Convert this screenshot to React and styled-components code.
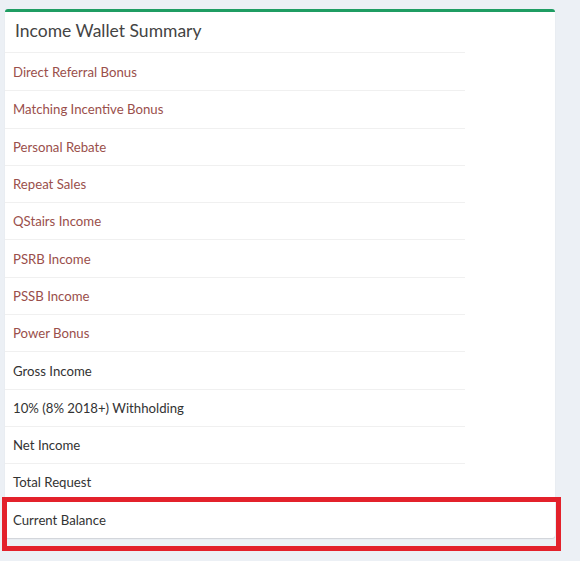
import styled, { createGlobalStyle } from "styled-components"

const GlobalStyle = createGlobalStyle`
  body {
    margin: 0;
    background: #ecf0f5;
    font-family: Lato, "Open Sans", sans-serif;
  }
`

const Page = styled.div`
  position: relative;
  width: 580px;
  height: 561px;
  padding: 9px 25px 0 5px;
  box-sizing: border-box;
`

const Box = styled.div`
  background: #fff;
  border-top: 3px solid #1f9d63;
  border-radius: 3px;
  box-shadow: 0 1px 1px rgba(0, 0, 0, 0.12);
`

const BoxHeader = styled.div`
  padding: 8px 10px 0 10px;
  height: 41px;
  box-sizing: border-box;
  width: 460px;
  border-bottom: 1px solid #f0f0f0;
`

const Title = styled.h3`
  margin: 0;
  font-size: 17.5px;
  font-weight: 400;
  color: #444;
`

const Table = styled.div`
  display: flex;
  flex-direction: column;
`

const Row = styled.div`
  width: 460px;
  height: 37.3px;
  box-sizing: border-box;
  padding: 0 8px;
  display: flex;
  align-items: center;
  font-size: 13.2px;
  color: ${p => (p.$link ? "#9a4f4b" : "#333")};
  border-top: ${p => (p.$first ? "none" : "1px solid #f0f0f0")};
`

const Highlight = styled.div`
  position: absolute;
  left: 2px;
  top: 497px;
  width: 559px;
  height: 54px;
  box-sizing: border-box;
  border: 5px solid #e3212b;
`

const rows = [
  { label: "Direct Referral Bonus", link: true },
  { label: "Matching Incentive Bonus", link: true },
  { label: "Personal Rebate", link: true },
  { label: "Repeat Sales", link: true },
  { label: "QStairs Income", link: true },
  { label: "PSRB Income", link: true },
  { label: "PSSB Income", link: true },
  { label: "Power Bonus", link: true },
  { label: "Gross Income" },
  { label: "10% (8% 2018+) Withholding" },
  { label: "Net Income" },
  { label: "Total Request" },
  { label: "Current Balance" },
]

export default function App() {
  return (
    <>
      <GlobalStyle />
      <Page>
        <Box>
          <BoxHeader>
            <Title>Income Wallet Summary</Title>
          </BoxHeader>
          <Table>
            {rows.map((r, i) => (
              <Row key={r.label} $link={r.link} $first={i === 0}>
                {r.label}
              </Row>
            ))}
          </Table>
        </Box>
        <Highlight />
      </Page>
    </>
  )
}
